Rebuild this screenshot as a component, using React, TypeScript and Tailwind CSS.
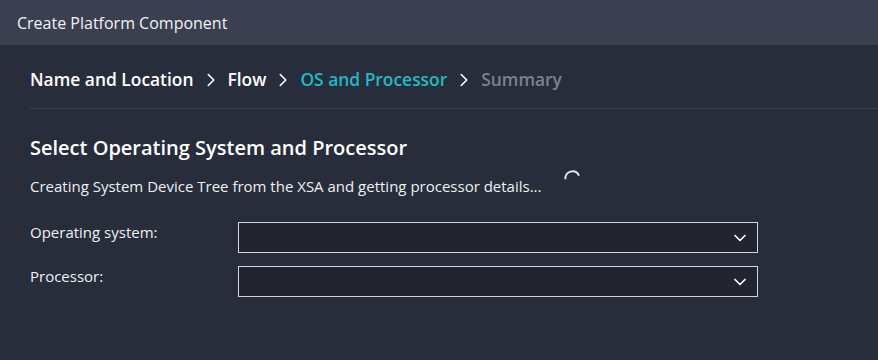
import React from 'react';
import { ChevronRight, ChevronDown } from 'lucide-react';

const steps = [
  { label: 'Name and Location', state: 'done' },
  { label: 'Flow', state: 'done' },
  { label: 'OS and Processor', state: 'active' },
  { label: 'Summary', state: 'todo' },
];

function SelectBox() {
  return (
    <div className="w-[520px] h-[31px] border border-[#d4d6dc] bg-[#22252f] flex items-center justify-end pr-[7px]">
      <ChevronDown size={20} strokeWidth={2} className="text-white" />
    </div>
  );
}

export default function App() {
  return (
    <div
      className="w-[878px] h-[360px] bg-[#282d3b] text-white overflow-hidden"
      style={{ fontFamily: '"Open Sans", "Noto Sans", sans-serif' }}
    >
      {/* Title bar */}
      <div className="h-[45px] bg-[#3b4050] flex items-center pl-[17px] text-[16px] text-[#f2f3f5]">
        Create Platform Component
      </div>

      {/* Breadcrumb */}
      <div className="ml-[30px] h-[64px] border-b border-[#3a3f4d] flex items-center gap-[6px] pt-[6px]">
        {steps.map((s, i) => (
          <React.Fragment key={s.label}>
            {i > 0 && <ChevronRight size={22} strokeWidth={1.75} className="text-white" />}
            <span
              className={
                s.state === 'active'
                  ? 'text-[17.4px] font-semibold text-[#22b9c4]'
                  : s.state === 'todo'
                  ? 'text-[17.4px] font-semibold text-[#7a8192]'
                  : 'text-[17.4px] font-semibold text-white'
              }
            >
              {s.label}
            </span>
          </React.Fragment>
        ))}
      </div>

      {/* Content */}
      <div className="pl-[30px] pt-[25px]">
        <h2 className="text-[20px] font-semibold leading-[28px] text-white">Select Operating System and Processor</h2>
        <div className="mt-[14px] flex items-start">
          <span className="text-[15px] leading-[20px] text-[#eef0f3]">
            Creating System Device Tree from the XSA and getting processor details...
          </span>
          <svg className="ml-[21px] -mt-[7px]" width="19" height="19" viewBox="0 0 20 20" fill="none">
            <path d="M2.5 10 A7.5 7.5 0 0 1 16.5 6.3" stroke="#e6e8ec" strokeWidth="2" strokeLinecap="round" />
          </svg>
        </div>

        <div className="mt-[26px] flex flex-col gap-[13px]">
          <div className="flex items-start">
            <label className="w-[208px] text-[15px] leading-[20px] text-[#eef0f3]">Operating system:</label>
            <SelectBox />
          </div>
          <div className="flex items-start">
            <label className="w-[208px] text-[15px] leading-[20px] text-[#eef0f3]">Processor:</label>
            <SelectBox />
          </div>
        </div>
      </div>
    </div>
  );
}
